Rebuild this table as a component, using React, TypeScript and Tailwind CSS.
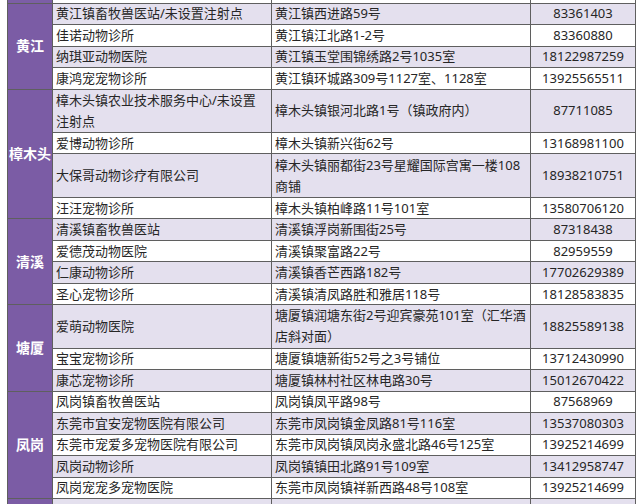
import React from 'react';

type Row = { name: React.ReactNode; addr: React.ReactNode; phone: string; tall?: boolean };
type Group = { region: string; rows: Row[] };

const groups: Group[] = [
  {
    region: '黄江',
    rows: [
      { name: '黄江镇畜牧兽医站/未设置注射点', addr: '黄江镇西进路59号', phone: '83361403' },
      { name: '佳诺动物诊所', addr: '黄江镇江北路1-2号', phone: '83360880' },
      { name: '纳琪亚动物医院', addr: '黄江镇玉堂围锦绣路2号1035室', phone: '18122987259' },
      { name: '康鸿宠宠物诊所', addr: '黄江镇环城路309号1127室、1128室', phone: '13925565511' },
    ],
  },
  {
    region: '樟木头',
    rows: [
      {
        name: (
          <>
            樟木头镇农业技术服务中心/未设置
            <br />
            注射点
          </>
        ),
        addr: '樟木头镇银河北路1号（镇政府内）',
        phone: '87711085',
        tall: true,
      },
      { name: '爱博动物诊所', addr: '樟木头镇新兴街62号', phone: '13168981100' },
      {
        name: '大保哥动物诊疗有限公司',
        addr: (
          <>
            樟木头镇丽都街23号星耀国际宫寓一楼108
            <br />
            商铺
          </>
        ),
        phone: '18938210751',
        tall: true,
      },
      { name: '汪汪宠物诊所', addr: '樟木头镇柏峰路11号101室', phone: '13580706120' },
    ],
  },
  {
    region: '清溪',
    rows: [
      { name: '清溪镇畜牧兽医站', addr: '清溪镇浮岗新围街25号', phone: '87318438' },
      { name: '爱德茂动物医院', addr: '清溪镇聚富路22号', phone: '82959559' },
      { name: '仁康动物诊所', addr: '清溪镇香芒西路182号', phone: '17702629389' },
      { name: '圣心宠物诊所', addr: '清溪镇清凤路胜和雅居118号', phone: '18128583835' },
    ],
  },
  {
    region: '塘厦',
    rows: [
      {
        name: '爱萌动物医院',
        addr: (
          <>
            塘厦镇润塘东街2号迎宾豪苑101室（汇华酒
            <br />
            店斜对面）
          </>
        ),
        phone: '18825589138',
        tall: true,
      },
      { name: '宝宝宠物诊所', addr: '塘厦镇塘新街52号之3号铺位', phone: '13712430990' },
      { name: '康芯宠物诊所', addr: '塘厦镇林村社区林电路30号', phone: '15012670422' },
    ],
  },
  {
    region: '凤岗',
    rows: [
      { name: '凤岗镇畜牧兽医站', addr: '凤岗镇凤平路98号', phone: '87568969' },
      { name: '东莞市宜安宠物医院有限公司', addr: '东莞市凤岗镇金凤路81号116室', phone: '13537080303' },
      { name: '东莞市宠爱多宠物医院有限公司', addr: '东莞市凤岗镇凤岗永盛北路46号125室', phone: '13925214699' },
      { name: '凤岗动物诊所', addr: '凤岗镇镇田北路91号109室', phone: '13412958747' },
      { name: '凤岗宠宠多宠物医院', addr: '东莞市凤岗镇祥新西路48号108室', phone: '13925214699' },
    ],
  },
];

const cell = 'border border-[#5f5f5f] p-0 align-middle';

const Cell: React.FC<{ tall?: boolean; center?: boolean; children: React.ReactNode }> = ({ tall, center, children }) => (
  <div
    className={`flex items-center overflow-visible whitespace-nowrap px-[3px] leading-[21px] ${
      tall ? 'h-[42.4px]' : 'h-[20.5px]'
    } ${center ? 'justify-center' : ''}`}
  >
    <div>{children}</div>
  </div>
);

const App: React.FC = () => {
  let index = 0;

  return (
    <div
      className="h-[504px] w-[641px] overflow-hidden bg-white pl-[7px] text-[13px] text-[#262626]"
      style={{ fontFamily: '"Noto Sans", "Noto Sans CJK SC", sans-serif' }}
    >
      <table className="w-[628px] table-fixed border-collapse">
        <colgroup>
          <col className="w-[45px]" />
          <col className="w-[219px]" />
          <col className="w-[259px]" />
          <col className="w-[105px]" />
        </colgroup>
        <tbody>
          {/* tail of the row above */}
          <tr>
            <td className="h-[3px] border-x border-[#5f5f5f] bg-[#7c5ea6] p-0" />
            <td className="h-[3px] border-x border-[#5f5f5f] bg-white p-0" />
            <td className="h-[3px] border-x border-[#5f5f5f] bg-white p-0" />
            <td className="h-[3px] border-x border-[#5f5f5f] bg-white p-0" />
          </tr>

          {groups.map((group) =>
            group.rows.map((row, i) => {
              const shaded = index++ % 2 === 0;
              const bg = shaded ? 'bg-[#e4e0ee]' : 'bg-white';
              return (
                <tr key={`${group.region}-${i}`}>
                  {i === 0 && (
                    <td
                      rowSpan={group.rows.length}
                      className="border border-[#5f5f5f] bg-[#7b5ca5] p-0 text-center align-middle text-[14px] font-semibold leading-[20px] text-white"
                    >
                      {group.region}
                    </td>
                  )}
                  <td className={`${cell} ${bg}`}>
                    <Cell tall={row.tall}>{row.name}</Cell>
                  </td>
                  <td className={`${cell} ${bg}`}>
                    <Cell tall={row.tall}>{row.addr}</Cell>
                  </td>
                  <td className={`${cell} ${bg}`}>
                    <Cell tall={row.tall} center>
                      {row.phone}
                    </Cell>
                  </td>
                </tr>
              );
            })
          )}

          {/* start of the next row */}
          <tr>
            <td className="h-[20px] border border-[#5f5f5f] bg-[#7b5ca5] p-0" />
            <td className="h-[20px] border border-[#5f5f5f] bg-[#e4e0ee] p-0" />
            <td className="h-[20px] border border-[#5f5f5f] bg-[#e4e0ee] p-0" />
            <td className="h-[20px] border border-[#5f5f5f] bg-[#e4e0ee] p-0" />
          </tr>
        </tbody>
      </table>
    </div>
  );
};

export default App;
